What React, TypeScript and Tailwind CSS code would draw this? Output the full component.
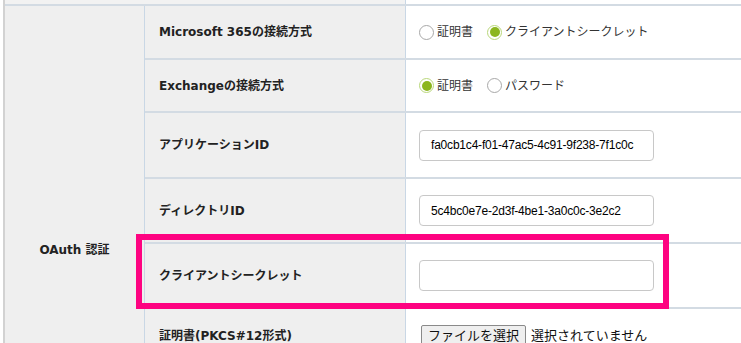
import React from "react";

const Radio = ({ checked }: { checked?: boolean }) =>
  checked ? (
    <span className="w-[15px] h-[15px] rounded-full border border-[#b9d77a] bg-white flex items-center justify-center shrink-0">
      <span className="w-[10px] h-[10px] rounded-full bg-[#8cb61e]" />
    </span>
  ) : (
    <span className="w-[15px] h-[15px] rounded-full border border-[#a8a8a8] bg-white shrink-0" />
  );

const Row = ({
  label,
  h,
  children,
}: {
  label: string;
  h: string;
  children?: React.ReactNode;
}) => (
  <div className={`flex border-b-2 border-[#d3dbe3] ${h}`}>
    <div className="w-[261px] bg-[#efefef] border-r border-[#c9d7e5] flex items-center pl-[14px] font-bold text-[12px] text-[#222]">
      {label}
    </div>
    <div className="flex-1 bg-white flex items-center pl-[13px] text-[12px] text-[#333]">
      {children}
    </div>
  </div>
);

export default function App() {
  return (
    <div className="relative w-[741px] h-[343px] overflow-hidden bg-white font-['DejaVu_Sans','Noto_Sans_CJK_JP',sans-serif]">
      <div className="ml-[3px] border-l-2 border-[#d2d2d2]">
        <div className="flex h-[6px] border-b-2 border-[#d3dbe3]">
          <div className="w-[401px] bg-[#f2f2f2] border-r border-[#c9d7e5]" />
          <div className="flex-1 bg-white" />
        </div>
        <div className="flex items-start">
          <div className="w-[140px] h-[488px] bg-[#efefef] border-r border-[#c9d7e5] flex items-center justify-center font-bold text-[12px] text-[#222]">
            OAuth 認証
          </div>
          <div className="flex-1">
            <Row label="Microsoft 365の接続方式" h="h-[54px]">
              <div className="flex items-center">
                <Radio />
                <span className="ml-[3px] mr-[14px]">証明書</span>
                <Radio checked />
                <span className="ml-[3px]">クライアントシークレット</span>
              </div>
            </Row>
            <Row label="Exchangeの接続方式" h="h-[53px]">
              <div className="flex items-center">
                <Radio checked />
                <span className="ml-[3px] mr-[14px]">証明書</span>
                <Radio />
                <span className="ml-[3px]">パスワード</span>
              </div>
            </Row>
            <Row label="アプリケーションID" h="h-[66px]">
              <div className="w-[235px] h-[31px] border border-[#c8c8c8] rounded-[4px] flex items-center pl-[11px] overflow-hidden font-['Liberation_Sans',sans-serif] text-[12px] text-[#000] tracking-[-0.2px] whitespace-nowrap">
                fa0cb1c4-f01-47ac5-4c91-9f238-7f1c0c
              </div>
            </Row>
            <Row label="ディレクトリID" h="h-[65px]">
              <div className="w-[235px] h-[31px] border border-[#c8c8c8] rounded-[4px] flex items-center pl-[11px] overflow-hidden font-['Liberation_Sans',sans-serif] text-[12px] text-[#000] tracking-[-0.2px] whitespace-nowrap">
                5c4bc0e7e-2d3f-4be1-3a0c0c-3e2c2
              </div>
            </Row>
            <Row label="クライアントシークレット" h="h-[65px]">
              <div className="w-[235px] h-[31px] border border-[#c8c8c8] rounded-[4px]" />
            </Row>
            <Row label="証明書(PKCS#12形式)" h="h-[56px]">
              <div className="flex items-center">
                <span className="h-[22px] px-[6px] flex items-center bg-[#efefef] border border-[#8a8a8a] rounded-[2px] text-[13px] text-[#111] ml-[2px]">
                  ファイルを選択
                </span>
                <span className="ml-[5px] text-[13px] text-[#111]">選択されていません</span>
              </div>
            </Row>
          </div>
        </div>
      </div>
      <div className="absolute left-[136px] top-[234px] w-[533px] h-[75px] border-[6px] border-[#fe0381]" />
    </div>
  );
}
